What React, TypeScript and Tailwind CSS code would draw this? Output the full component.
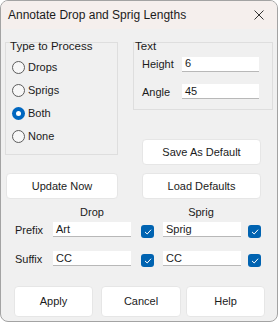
const font = "font-['Liberation_Sans',Arial,sans-serif]";

const Radio = ({ label, checked }: { label: string; checked?: boolean }) => (
  <div className="flex h-[23px] items-center gap-[3px]">
    {checked ? (
      <span className="flex h-[13px] w-[13px] items-center justify-center rounded-full bg-[#0067c0]">
        <span className="h-[5px] w-[5px] rounded-full bg-white" />
      </span>
    ) : (
      <span className="h-[13px] w-[13px] rounded-full border border-[#5c5c5c] bg-[#f7f7f7]" />
    )}
    <span>{label}</span>
  </div>
);

const TextBox = ({ value, width = "w-[78px]" }: { value: string; width?: string }) => (
  <div className={`${width} flex h-[15px] items-center border-b border-[#b8b8b8] bg-white pl-[3px] leading-none`}>
    {value}
  </div>
);

const Check = () => (
  <span className="mt-[3px] flex h-[13px] w-[13px] items-center justify-center rounded-[3px] bg-[#0063b1]">
    <svg width="8" height="8" viewBox="0 0 8 8" fill="none">
      <path d="M1.3 4.2 L3.2 6 L6.8 2" stroke="white" strokeWidth="1" strokeLinecap="round" strokeLinejoin="round" />
    </svg>
  </span>
);

const Button = ({ label, className }: { label: string; className: string }) => (
  <div className={`flex items-center justify-center rounded-[4px] border border-[#e6e6e6] bg-white ${className}`}>
    {label}
  </div>
);

export default function App() {
  return (
    <div className={`${font} text-[11px] text-[#1b1b1b]`}>
      <div className="flex h-[322px] w-[278px] flex-col overflow-hidden rounded-[8px] border border-[#a3a3a3] bg-[#f0f0f0]">
        {/* title bar */}
        <div className="flex h-[28px] items-center justify-between bg-[#f5efed] pl-[7px] pr-[13px]">
          <span className="text-[12px]">Annotate Drop and Sprig Lengths</span>
          <svg width="10" height="10" viewBox="0 0 10 10">
            <path d="M0.5 0.5 L9.5 9.5 M9.5 0.5 L0.5 9.5" stroke="#333" strokeWidth="1" />
          </svg>
        </div>

        {/* top section */}
        <div className="ml-[4px] mt-[13px] flex gap-[15px]">
          <div className="flex w-[113px] flex-col">
            <div className="h-[113px] border border-[#dedede] pl-[4px]">
              <div className="-mt-[3px] h-[13px] text-[11.5px] leading-[13px]">Type to Process</div>
              <div className="mt-[3px] pl-[2px]">
                <Radio label="Drops" />
                <Radio label="Sprigs" />
                <Radio label="Both" checked />
                <Radio label="None" />
              </div>
            </div>
            <Button label="Update Now" className="ml-[1px] mt-[18px] h-[26px] w-[112px]" />
          </div>

          <div className="flex flex-col">
            <div className="h-[68px] w-[140px] border border-[#dedede]">
              <div className="-mt-[3px] h-[13px] pl-[1px] text-[11.5px] leading-[13px]">Text</div>
              <div className="mt-[3px] flex items-center pl-[8px]">
                <span className="w-[40px]">Height</span>
                <TextBox value="6" width="w-[77px]" />
              </div>
              <div className="mt-[11px] flex items-center pl-[8px]">
                <span className="w-[40px]">Angle</span>
                <TextBox value="45" width="w-[77px]" />
              </div>
            </div>
            <Button label="Save As Default" className="ml-[9px] mt-[29px] h-[26px] w-[119px]" />
            <Button label="Load Defaults" className="ml-[9px] mt-[8px] h-[26px] w-[119px]" />
          </div>
        </div>

        {/* prefix / suffix */}
        <div className="ml-[52px] mt-[6px] flex h-[14px] items-center">
          <span className="w-[78px] text-center">Drop</span>
          <span className="ml-[31px] w-[78px] text-center">Sprig</span>
        </div>
        <div className="ml-[14px] mt-[3px] flex items-start">
          <span className="flex h-[15px] w-[38px] items-center pt-[2px]">Prefix</span>
          <TextBox value="Art" />
          <span className="ml-[10px]"><Check /></span>
          <span className="ml-[9px]"><TextBox value="Sprig" /></span>
          <span className="ml-[7px]"><Check /></span>
        </div>
        <div className="ml-[14px] mt-[13px] flex items-start">
          <span className="flex h-[15px] w-[38px] items-center pt-[2px]">Suffix</span>
          <TextBox value="CC" />
          <span className="ml-[10px]"><Check /></span>
          <span className="ml-[9px]"><TextBox value="CC" /></span>
          <span className="ml-[7px]"><Check /></span>
        </div>

        {/* bottom buttons */}
        <div className="mb-[4px] ml-[13px] mt-auto flex">
          <Button label="Apply" className="h-[31px] w-[79px]" />
          <Button label="Cancel" className="ml-[8px] h-[31px] w-[80px]" />
          <Button label="Help" className="ml-[5px] h-[31px] w-[79px]" />
        </div>
      </div>
    </div>
  );
}
